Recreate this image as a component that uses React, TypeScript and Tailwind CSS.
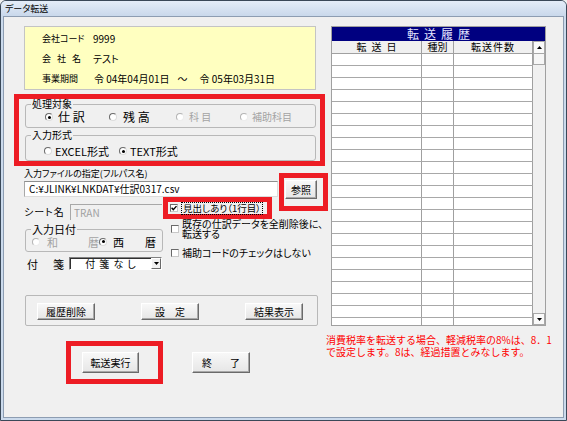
import React from "react";

function Radio({ checked = false, disabled = false }: { checked?: boolean; disabled?: boolean }) {
  return (
    <span
      className={
        disabled
          ? "inline-flex w-[8px] h-[8px] shrink-0 rounded-full border border-t-[#b4b4b4] border-l-[#b4b4b4] border-r-[#ececec] border-b-[#ececec] bg-white items-center justify-center"
          : "inline-flex w-[8px] h-[8px] shrink-0 rounded-full border border-t-[#6a6a6a] border-l-[#6a6a6a] border-r-[#dcdcdc] border-b-[#dcdcdc] bg-white items-center justify-center"
      }
    >
      {checked && <span className="w-[3px] h-[3px] rounded-full bg-black" />}
    </span>
  );
}

function Check({ checked = false }: { checked?: boolean }) {
  return (
    <span className="inline-flex w-[8px] h-[8px] shrink-0 border border-t-[#6a6a6a] border-l-[#6a6a6a] border-r-[#c8c8c8] border-b-[#c8c8c8] bg-white items-center justify-center">
      {checked && (
        <svg width="6" height="6" viewBox="0 0 6 6">
          <path d="M0.6 2.8 L2.3 4.6 L5.5 1.1" stroke="#000" strokeWidth="1.4" fill="none" />
        </svg>
      )}
    </span>
  );
}

function Btn({ children, className = "" }: { children: React.ReactNode; className?: string }) {
  return (
    <div
      className={
        "flex items-center justify-center shrink-0 bg-gradient-to-b from-[#f8f8f8] to-[#e6e6e6] border border-t-white border-l-white border-r-[#6a6a6a] border-b-[#6a6a6a] shadow-[inset_-1px_-1px_0_#a8a8a8] text-[10px] leading-none text-black whitespace-nowrap " +
        className
      }
    >
      {children}
    </div>
  );
}

function Tri({ up }: { up?: boolean }) {
  return (
    <svg width="5" height="3" viewBox="0 0 5 3">
      {up ? <path d="M0 3 L2.5 0 L5 3 Z" fill="#000" /> : <path d="M0 0 L5 0 L2.5 3 Z" fill="#000" />}
    </svg>
  );
}

export default function App() {
  const rows = Array.from({ length: 23 });
  return (
    <div className="w-[567px] h-[421px] font-['Noto_Sans_CJK_JP',sans-serif] [font-feature-settings:'palt'] text-black bg-[#f0f0f0]">
      <div className="w-full h-full flex flex-col border border-[#3a4858] rounded-t-[6px] bg-[#cbdaec] overflow-hidden">
        {/* title bar */}
        <div className="h-[15px] shrink-0 flex items-center pl-[4px] bg-gradient-to-b from-[#e4edf8] to-[#c9d8eb]">
          <span className="text-[9px] leading-[15px]">データ転送</span>
        </div>
        {/* client */}
        <div className="flex-1 mx-[2px] mb-[2px] border border-[#8d9db2] bg-[#f0f0f0] flex pl-[10px] pt-[9px]">
          {/* left column */}
          <div className="w-[317px] shrink-0 flex flex-col">
            {/* yellow info */}
            <div className="ml-[10px] w-[292px] h-[64px] bg-[#ffffc0] border border-[#c4c4c4] pt-[2px] flex flex-col">
              <div className="h-[20px] flex items-center pl-[17px]">
                <span className="w-[51px] text-[9px] leading-[12px]">会社コード</span>
                <span className="text-[10px] leading-[12px]">9999</span>
              </div>
              <div className="h-[20px] flex items-center pl-[17px]">
                <span className="w-[51px] text-[9px] leading-[12px] tracking-[6px]">会社名</span>
                <span className="text-[10px] leading-[12px]">テスト</span>
              </div>
              <div className="h-[20px] flex items-center pl-[17px]">
                <span className="w-[52px] text-[9px] leading-[12px]">事業期間</span>
                <span className="text-[10px] leading-[12px] whitespace-nowrap">令 04年04月01日</span>
                <span className="ml-[8px] text-[10px] leading-[12px]">～</span>
                <span className="ml-[12px] text-[10px] leading-[12px] whitespace-nowrap">令 05年03月31日</span>
              </div>
            </div>

            {/* red box 1 */}
            <div className="mt-[4px] w-[311px] border-[5px] border-[#ed1c24] pl-[6px] pr-[4px] flex flex-col">
              <fieldset className="border border-[#b8b8b8] rounded-[3px] pb-[3px]">
                <legend className="ml-[5px] px-[1px] text-[10px] leading-[10px]">処理対象</legend>
                <div className="h-[14px] mt-[1px] flex items-center">
                  <div className="ml-[19px] w-[64px] flex items-center">
                    <Radio checked />
                    <span className="ml-[5px] text-[12px] leading-[14px] whitespace-nowrap">仕 訳</span>
                  </div>
                  <div className="w-[67px] flex items-center">
                    <Radio />
                    <span className="ml-[6px] text-[12px] leading-[14px] whitespace-nowrap">残 高</span>
                  </div>
                  <div className="w-[64px] flex items-center">
                    <Radio disabled />
                    <span className="ml-[5px] text-[10px] leading-[14px] text-[#a3a3a3] whitespace-nowrap">科 目</span>
                  </div>
                  <div className="flex items-center">
                    <Radio disabled />
                    <span className="ml-[4px] text-[10px] leading-[14px] text-[#a3a3a3] whitespace-nowrap">補助科目</span>
                  </div>
                </div>
              </fieldset>
              <fieldset className="mt-[2px] border border-[#b8b8b8] rounded-[3px] pb-[2px]">
                <legend className="ml-[5px] px-[1px] text-[10px] leading-[10px]">入力形式</legend>
                <div className="h-[14px] mt-[4px] flex items-center">
                  <div className="ml-[18px] w-[75px] flex items-center">
                    <Radio />
                    <span className="ml-[3px] text-[11px] leading-[14px] whitespace-nowrap">EXCEL形式</span>
                  </div>
                  <div className="flex items-center">
                    <Radio checked />
                    <span className="ml-[3px] text-[11px] leading-[14px] whitespace-nowrap">TEXT形式</span>
                  </div>
                </div>
              </fieldset>
            </div>

            {/* section: file */}
            <div className="flex">
              <div className="w-[265px] shrink-0 pl-[10px] flex flex-col">
                <div className="mt-[2px] text-[9px] leading-[12px] whitespace-nowrap">入力ファイルの指定(フルパス名)</div>
                <div className="mt-[1px] w-[254px] h-[16px] bg-white border border-t-[#8e8f8f] border-l-[#a8a8a8] border-r-[#dcdcdc] border-b-[#dcdcdc] flex items-center pl-[4px] text-[10px] leading-[14px] whitespace-nowrap">
                  C:¥JLINK¥LNKDAT¥仕訳0317.csv
                </div>
                <div className="flex">
                  {/* B-left */}
                  <div className="w-[139px] shrink-0 flex flex-col">
                    <div className="mt-[7px] h-[16px] flex items-center">
                      <span className="w-[46px] text-[10px] leading-[12px] tracking-[1px] whitespace-nowrap">シート名</span>
                      <div className="w-[92px] h-[16px] border-t border-l border-[#a8a8a8] bg-[#f0f0f0] text-[10px] text-[#a0a0a0] pl-[3px] leading-[15px]">
                        TRAN
                      </div>
                    </div>
                    <fieldset className="mt-[4px] ml-[1px] w-[138px] border border-[#b8b8b8] rounded-[3px] pb-[3px]">
                      <legend className="ml-[5px] px-[1px] text-[11px] leading-[11px]">入力日付</legend>
                      <div className="h-[13px] flex items-center">
                        <div className="ml-[6px] w-[67px] flex items-center">
                          <Radio disabled />
                          <span className="ml-[7px] w-[41px] text-[11px] leading-[12px] text-[#a3a3a3]">和</span>
                          <span className="text-[11px] leading-[12px] text-[#a3a3a3]">暦</span>
                        </div>
                        <div className="flex items-center">
                          <Radio checked />
                          <span className="ml-[6px] w-[32px] text-[11px] leading-[12px]">西</span>
                          <span className="text-[11px] leading-[12px]">暦</span>
                        </div>
                      </div>
                    </fieldset>
                    <div className="mt-[5px] h-[13px] flex items-center">
                      <span className="ml-[3px] w-[42px] flex text-[11px] leading-[12px]">
                        <span className="w-[26px]">付</span>
                        <span>箋</span>
                      </span>
                      <div className="w-[93px] h-[13px] bg-white border border-t-[#808080] border-l-[#808080] border-r-white border-b-white shadow-[inset_1px_1px_0_#303030] flex items-stretch">
                        <div className="flex-1 flex items-center justify-center">
                          <span className="text-[10px] tracking-[4px] leading-[11px] pl-[4px] whitespace-nowrap">付箋なし</span>
                        </div>
                        <div className="w-[10px] bg-[#f0f0f0] border border-t-white border-l-white border-r-[#6a6a6a] border-b-[#6a6a6a] flex items-center justify-center">
                          <Tri />
                        </div>
                      </div>
                    </div>
                  </div>
                  {/* B-right */}
                  <div className="flex flex-col">
                    <div className="w-[109px] h-[22px] border-[5px] border-[#ed1c24] flex items-center pl-[2px]">
                      <Check checked />
                      <span className="ml-[4px] px-[1px] text-[9.5px] leading-[11px] outline-1 outline-dotted outline-[#000] whitespace-nowrap">
                        見出しあり（1行目）
                      </span>
                    </div>
                    <div className="ml-[8px] flex items-center">
                      <Check />
                      <span className="ml-[3px] text-[10px] leading-[10px] whitespace-nowrap">
                        既存の仕訳データを全削除後に、
                        <br />
                        転送する
                      </span>
                    </div>
                    <div className="ml-[8px] mt-[8px] flex items-center">
                      <Check />
                      <span className="ml-[3px] text-[10px] leading-[12px] whitespace-nowrap">補助コードのチェックはしない</span>
                    </div>
                  </div>
                </div>
              </div>
              {/* 参照 red box */}
              <div className="mt-[7px] w-[49px] h-[38px] shrink-0 border-[5px] border-[#ed1c24] pl-[1px] pt-[2px]">
                <Btn className="w-[32px] h-[19px] text-[9px]">参照</Btn>
              </div>
            </div>

            {/* button group */}
            <div className="mt-[25px] ml-[11px] w-[293px] h-[31px] border border-[#b8b8b8] rounded-[2px] flex items-start pt-[7px] pl-[11px] gap-[46px]">
              <Btn className="w-[58px] h-[17px]">履歴削除</Btn>
              <Btn className="w-[58px] h-[17px]">設　定</Btn>
              <Btn className="w-[58px] h-[17px]">結果表示</Btn>
            </div>

            {/* bottom buttons */}
            <div className="mt-[15px] flex items-start">
              <div className="ml-[52px] w-[97px] h-[43px] border-[5px] border-[#ed1c24] pl-[11px] pt-[6px]">
                <Btn className="w-[57px] h-[21px]">転送実行</Btn>
              </div>
              <Btn className="ml-[29px] mt-[11px] w-[58px] h-[21px] tracking-[4px] pl-[4px]">終　了</Btn>
            </div>
          </div>

          {/* right column */}
          <div className="flex flex-col">
            <div className="w-[215px] h-[300px] border border-[#a0a0a0] bg-white flex flex-col">
              <div className="h-[14px] shrink-0 bg-[#000080] text-[#e6e6ff] text-[12px] leading-[14px] tracking-[5px] pl-[5px] text-center">
                転送履歴
              </div>
              <div className="flex-1 flex overflow-hidden">
                <div className="w-[201px] shrink-0 flex flex-col">
                  <div className="h-[13px] shrink-0 flex bg-[#f0f0f0] border-b border-[#a0a0a0] text-[10px] leading-[12px]">
                    <div className="w-[90px] border-r border-[#a0a0a0] text-center tracking-[5px] pl-[5px]">転送日</div>
                    <div className="w-[32px] border-r border-[#a0a0a0] text-center">種別</div>
                    <div className="w-[79px] border-r border-[#a0a0a0] text-center tracking-[1px]">転送件数</div>
                  </div>
                  {rows.map((_, i) => (
                    <div key={i} className="h-[12px] shrink-0 flex border-b border-[#a8a8a8]">
                      <div className="w-[90px] border-r border-[#a0a0a0]" />
                      <div className="w-[32px] border-r border-[#a0a0a0]" />
                      <div className="w-[79px] border-r border-[#a0a0a0]" />
                    </div>
                  ))}
                </div>
                <div className="w-[12px] shrink-0 bg-[#f0f0f0] flex flex-col">
                  <div className="h-[13px] shrink-0 bg-[#fafafa] border border-[#a8a8a8] flex items-center justify-center">
                    <Tri up />
                  </div>
                  <div className="h-[11px] shrink-0 bg-[#f6f6f6] border border-[#a8a8a8] border-t-0" />
                  <div className="flex-1" />
                  <div className="h-[12px] shrink-0 bg-[#fafafa] border border-[#a8a8a8] flex items-center justify-center">
                    <Tri />
                  </div>
                </div>
              </div>
            </div>
            <div className="mt-[8px] -ml-[5px] text-[10px] leading-[12px] text-[#ff0000] whitespace-nowrap [font-feature-settings:normal]">
              消費税率を転送する場合、軽減税率の8%は、8．1
              <br />
              で設定します。8は、経過措置とみなします。
            </div>
          </div>
        </div>
      </div>
    </div>
  );
}
